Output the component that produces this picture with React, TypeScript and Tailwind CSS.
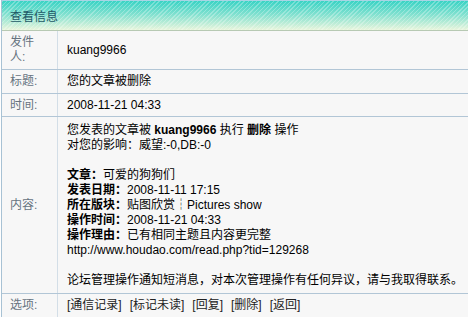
import React from 'react';

const font = "font-['Liberation_Sans','Noto_Sans_CJK_SC',sans-serif]";

interface RowProps {
  label: string;
  children: React.ReactNode;
  className?: string;
  labelClass?: string;
}

const Row: React.FC<RowProps> = ({ label, children, className = '', labelClass = '' }) => (
  <div className={`flex border-b border-[#b2c6d6] ${className}`}>
    <div
      className={`w-[56px] shrink-0 flex items-center border-r border-[#d3dee7] pl-[8px] pr-[14px] text-[#66737f] ${labelClass}`}
    >
      {label}
    </div>
    <div className="flex-1 flex items-center pl-[9px] text-black">{children}</div>
  </div>
);

export default function App() {
  const boldLines: [string, string][] = [
    ['文章：', '可爱的狗狗们'],
    ['发表日期：', '2008-11-11 17:15'],
    ['所在版块：', '贴图欣赏┆Pictures show'],
    ['操作时间：', '2008-11-21 04:33'],
    ['操作理由：', '已有相同主题且内容更完整'],
  ];

  return (
    <div className={`w-[468px] h-[317px] overflow-hidden bg-white text-[12px] leading-[15px] ${font}`}>
      <div className="ml-px border-l border-[#a8c2d4] bg-[#f7f7f7]">
        {/* Header */}
        <div className="h-[31px] flex items-center pl-[8px] pt-[3px] border-t border-[#a9d4e4] border-b border-b-[#b7c9b3] text-[#1f5866] [background-image:repeating-linear-gradient(135deg,rgba(255,255,255,0.28)_0px,rgba(255,255,255,0.28)_1px,transparent_1px,transparent_3px),linear-gradient(#38d3c4,#7fe0cf_45%,#e8f5dc)]">
          查看信息
        </div>

        <Row label="发件人:" className="h-[39px]">
          kuang9966
        </Row>
        <Row label="标题:" className="h-[24px]">
          您的文章被删除
        </Row>
        <Row label="时间:" className="h-[23px]">
          2008-11-21 04:33
        </Row>
        <Row label="内容:" className="h-[177px]">
          <div className="py-[5px]">
            <div>
              您发表的文章被 <b>kuang9966</b> 执行 <b>删除</b> 操作
            </div>
            <div>对您的影响：威望:-0,DB:-0</div>
            <div className="h-[15px]" />
            {boldLines.map(([k, v]) => (
              <div key={k}>
                <b>{k}</b>
                {v}
              </div>
            ))}
            <div>http://www.houdao.com/read.php?tid=129268</div>
            <div className="h-[15px]" />
            <div>论坛管理操作通知短消息，对本次管理操作有任何异议，请与我取得联系。</div>
          </div>
        </Row>
        <Row label="选项:" className="h-[24px]">
          <div className="flex gap-[8px] text-[#222]">
            <span>[通信记录]</span>
            <span>[标记未读]</span>
            <span>[回复]</span>
            <span>[删除]</span>
            <span>[返回]</span>
          </div>
        </Row>
      </div>
    </div>
  );
}
